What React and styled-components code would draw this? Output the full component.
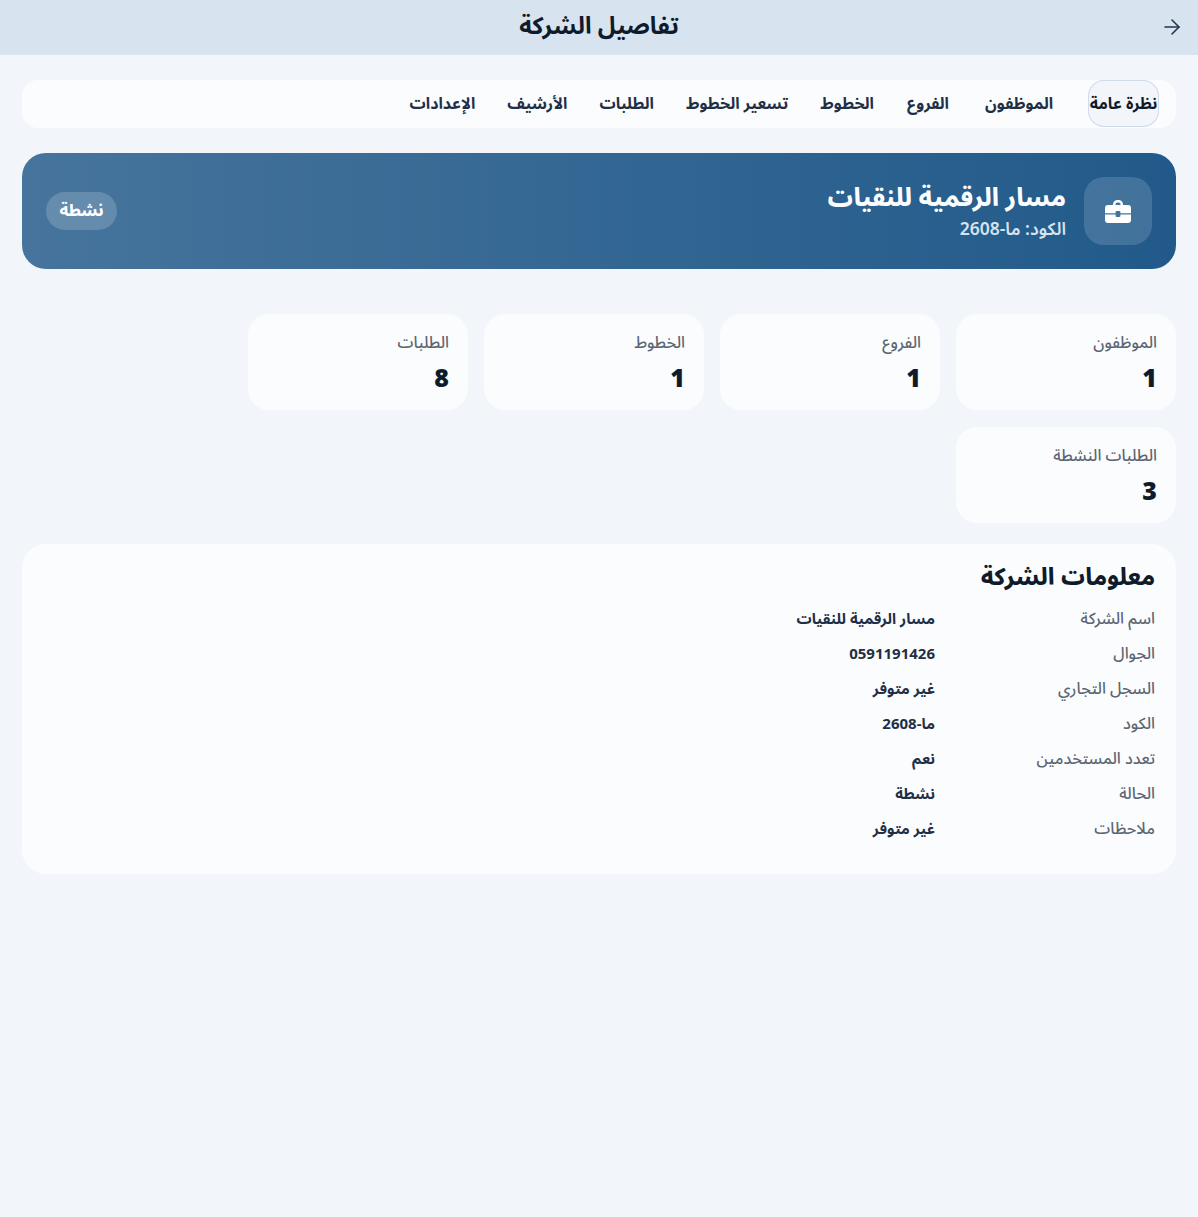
import React from 'react';
import styled, { createGlobalStyle } from 'styled-components';
import { ArrowRight } from 'lucide-react';

const GlobalStyle = createGlobalStyle`
  html, body { margin: 0; padding: 0; background: #f2f5fa; }
  body { font-family: "Noto Sans Arabic", "Noto Sans", "DejaVu Sans", sans-serif; }
`;

const Page = styled.div`
  direction: rtl;
  min-height: 1217px;
  background: #f2f5fa;
  color: #0f1b2a;
`;
const TopBar = styled.header`
  height: 55px;
  background: #d7e3ef;
  display: flex;
  align-items: center;
  justify-content: center;
  position: relative;
`;
const BackButton = styled.button`
  position: absolute;
  right: 14px;
  top: 15px;
  width: 24px;
  height: 24px;
  padding: 0;
  border: 0;
  background: none;
  color: #26364c;
  display: flex;
`;
const PageTitle = styled.h1`
  margin: 0 0 2px;
  font-size: 24px;
  font-weight: 700;
  color: #0f1b2a;
`;
const Content = styled.main`
  padding: 25px 22px 0;
  display: flex;
  flex-direction: column;
`;
const Tabs = styled.nav`
  height: 48px;
  background: #fbfcfe;
  border-radius: 16px;
  display: flex;
  gap: 32px;
  padding-right: 17px;
`;
const Tab = styled.div`
  display: flex;
  align-items: center;
  justify-content: center;
  height: 47px;
  min-width: ${p => p.$minWidth || 0}px;
  font-size: 16px;
  font-weight: 700;
  white-space: nowrap;
  color: ${p => (p.$active ? '#0f1b2a' : '#1f2f45')};
  border-radius: 16px;
  box-sizing: border-box;
  background: ${p => (p.$active ? '#f2f5fa' : 'transparent')};
  box-shadow: ${p => (p.$active ? 'inset 0 0 0 1px #d0dbe9' : 'none')};
`;
const Hero = styled.section`
  margin-top: 25px;
  height: 116px;
  border-radius: 24px;
  background: linear-gradient(270deg, #215a8a, #46749c);
  padding: 0 24px;
  display: flex;
  align-items: center;
  justify-content: space-between;
`;
const HeroMain = styled.div`
  display: flex;
  align-items: center;
  gap: 18px;
`;
const IconBox = styled.div`
  width: 68px;
  height: 68px;
  border-radius: 20px;
  background: rgba(255, 255, 255, 0.15);
  display: flex;
  align-items: center;
  justify-content: center;
`;
const HeroName = styled.div`
  font-size: 25px;
  font-weight: 800;
  color: #fbfcfe;
  line-height: 38px;
`;
const HeroCode = styled.div`
  font-size: 17.5px;
  font-weight: 600;
  color: #d7e3ef;
  line-height: 26px;
`;
const Badge = styled.div`
  width: 71px;
  height: 38px;
  border-radius: 19px;
  background: rgba(255, 255, 255, 0.18);
  color: #fff;
  font-size: 16px;
  font-weight: 800;
  display: flex;
  align-items: center;
  justify-content: center;
`;
const StatGrid = styled.section`
  margin-top: 45px;
  display: grid;
  grid-template-columns: repeat(4, 220px);
  gap: 17px 16px;
`;
const StatCard = styled.div`
  height: 96px;
  box-sizing: border-box;
  background: #fbfcfe;
  border-radius: 21px;
  padding: 16px 19px;
`;
const StatLabel = styled.div`
  font-size: 16px;
  font-weight: 500;
  color: #5c6673;
  line-height: 26px;
`;
const StatValue = styled.div`
  font-size: 25px;
  font-weight: 900;
  color: #0f1b2a;
  line-height: 46px;
`;
const InfoCard = styled.section`
  margin-top: 21px;
  height: 330px;
  box-sizing: border-box;
  background: #fbfcfe;
  border-radius: 24px;
  padding: 16px 21px;
`;
const InfoTitle = styled.h2`
  margin: 0 0 5px;
  font-size: 23.5px;
  font-weight: 800;
  line-height: 36px;
  color: #0f1b2a;
`;
const InfoRow = styled.div`
  display: grid;
  grid-template-columns: 220px 1fr;
  height: 35px;
  align-items: center;
`;
const InfoLabel = styled.div`
  font-size: 16px;
  color: #5c6673;
  font-weight: 500;
`;
const InfoValue = styled.div`
  font-size: 15px;
  color: #1f2f45;
  font-weight: 700;
`;

const tabs = [
  { label: 'نظرة عامة', minWidth: 71 },
  { label: 'الموظفون', minWidth: 74 },
  { label: 'الفروع', minWidth: 44 },
  { label: 'الخطوط' },
  { label: 'تسعير الخطوط' },
  { label: 'الطلبات' },
  { label: 'الأرشيف' },
  { label: 'الإعدادات' },
];
const stats = [
  ['الموظفون', '1'],
  ['الفروع', '1'],
  ['الخطوط', '1'],
  ['الطلبات', '8'],
  ['الطلبات النشطة', '3'],
];
const info = [
  ['اسم الشركة', 'مسار الرقمية للنقيات'],
  ['الجوال', '0591191426'],
  ['السجل التجاري', 'غير متوفر'],
  ['الكود', 'ما-2608'],
  ['تعدد المستخدمين', 'نعم'],
  ['الحالة', 'نشطة'],
  ['ملاحظات', 'غير متوفر'],
];

function BriefcaseIcon() {
  return (
    <svg width="26" height="23" viewBox="0 0 26 23" fill="#fff">
      <path d="M8 5V4.500A4.500 4.500 0 0 1 12.500 0h1A4.500 4.500 0 0 1 18 4.500V5h-2.400v-.5a2.100 2.100 0 0 0-2.100-2.100h-1a2.100 2.100 0 0 0-2.100 2.100V5z" />
      <path d="M3 5h20a3 3 0 0 1 3 3v5.200H15.400V12a1 1 0 0 0-1-1h-2.800a1 1 0 0 0-1 1v1.200H0V8a3 3 0 0 1 3-3z" />
      <path d="M0 14.400h10.600V16a1 1 0 0 0 1 1h2.800a1 1 0 0 0 1-1v-1.600H26V20a3 3 0 0 1-3 3H3a3 3 0 0 1-3-3z" />
    </svg>
  );
}

export default function App() {
  return (
    <Page>
      <GlobalStyle />
      <TopBar>
        <BackButton><ArrowRight size={24} strokeWidth={1.6} /></BackButton>
        <PageTitle>تفاصيل الشركة</PageTitle>
      </TopBar>
      <Content>
        <Tabs>
          {tabs.map((t, i) => <Tab key={t.label} $active={i === 0} $minWidth={t.minWidth}>{t.label}</Tab>)}
        </Tabs>
        <Hero>
          <HeroMain>
            <IconBox><BriefcaseIcon /></IconBox>
            <div>
              <HeroName>مسار الرقمية للنقيات</HeroName>
              <HeroCode>الكود: ما-2608</HeroCode>
            </div>
          </HeroMain>
          <Badge>نشطة</Badge>
        </Hero>
        <StatGrid>
          {stats.map(([label, value]) => (
            <StatCard key={label}>
              <StatLabel>{label}</StatLabel>
              <StatValue>{value}</StatValue>
            </StatCard>
          ))}
        </StatGrid>
        <InfoCard>
          <InfoTitle>معلومات الشركة</InfoTitle>
          {info.map(([label, value]) => (
            <InfoRow key={label}>
              <InfoLabel>{label}</InfoLabel>
              <InfoValue>{value}</InfoValue>
            </InfoRow>
          ))}
        </InfoCard>
      </Content>
    </Page>
  );
}
